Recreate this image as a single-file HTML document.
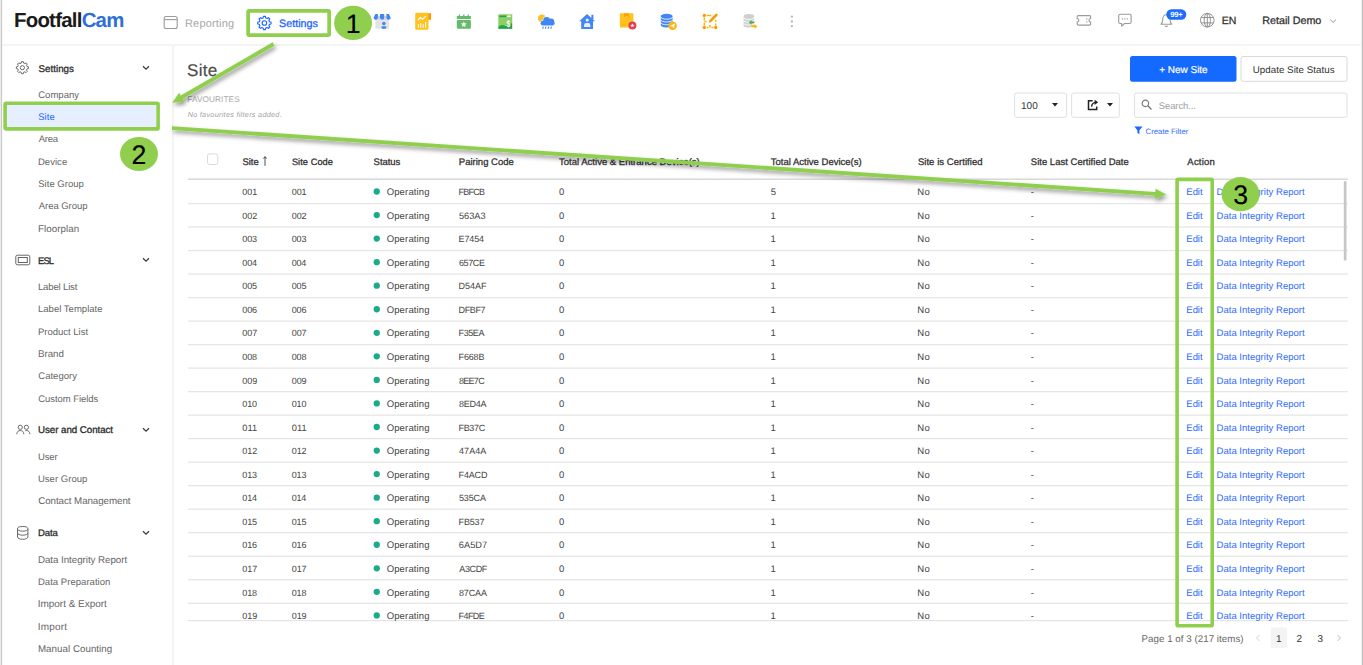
<!DOCTYPE html>
<html lang="en"><head><meta charset="utf-8"><title>FootfallCam - Site</title>
<style>
html,body{margin:0;padding:0;background:#fff}
body{width:1363px;height:665px;position:relative;overflow:hidden;font-family:"Liberation Sans",sans-serif;text-rendering:geometricPrecision}
.b{position:absolute;display:block}
.t{position:absolute;white-space:nowrap;line-height:20px;height:20px}
</style></head><body>
<svg class="b" style="left:0;top:0" width="1363" height="665" viewBox="0 0 1363 665"><rect x="0" y="0" width="1" height="665" fill="#ebebeb"/><rect x="1" y="0" width="1.100" height="665" fill="#c8c8c8"/><rect x="1361.700" y="0" width="1.300" height="665" fill="#c0c0c0"/><rect x="2.200" y="43.900" width="1359.300" height="2.100" fill="#f3f4f6"/><rect x="172" y="45" width="2" height="620" fill="#f3f4f6"/><rect x="6.900" y="104.900" width="149.300" height="22" fill="#e6efff"/><rect x="1130" y="56" width="106.500" height="25.800" rx="2.500" fill="#1469ff"/><rect x="1241" y="56.500" width="106" height="24.800" rx="2" fill="#fff" stroke="#dadada"/><rect x="1014.600" y="93" width="52" height="24.300" rx="2" fill="#fff" stroke="#e0e0e0"/><rect x="1071.600" y="93" width="47.700" height="24.300" rx="2" fill="#fff" stroke="#e0e0e0"/><rect x="1134.500" y="93" width="212.500" height="24.300" rx="2" fill="#fff" stroke="#e0e0e0"/><rect x="207.500" y="153.900" width="10.300" height="10.600" rx="2" fill="#fff" stroke="#dadada"/><rect x="187.900" y="177.900" width="1159.900" height="1" fill="#ececec"/><rect x="187.900" y="178.900" width="1159.900" height="1.100" fill="#d9d9d9"/><rect x="187.900" y="202.90" width="1159.900" height="1.300" fill="#e6e6e6"/><rect x="187.900" y="226.41" width="1159.900" height="1.300" fill="#e6e6e6"/><rect x="187.900" y="249.92" width="1159.900" height="1.300" fill="#e6e6e6"/><rect x="187.900" y="273.43" width="1159.900" height="1.300" fill="#e6e6e6"/><rect x="187.900" y="296.94" width="1159.900" height="1.300" fill="#e6e6e6"/><rect x="187.900" y="320.45" width="1159.900" height="1.300" fill="#e6e6e6"/><rect x="187.900" y="343.96" width="1159.900" height="1.300" fill="#e6e6e6"/><rect x="187.900" y="367.47" width="1159.900" height="1.300" fill="#e6e6e6"/><rect x="187.900" y="390.98" width="1159.900" height="1.300" fill="#e6e6e6"/><rect x="187.900" y="414.49" width="1159.900" height="1.300" fill="#e6e6e6"/><rect x="187.900" y="438.00" width="1159.900" height="1.300" fill="#e6e6e6"/><rect x="187.900" y="461.51" width="1159.900" height="1.300" fill="#e6e6e6"/><rect x="187.900" y="485.02" width="1159.900" height="1.300" fill="#e6e6e6"/><rect x="187.900" y="508.53" width="1159.900" height="1.300" fill="#e6e6e6"/><rect x="187.900" y="532.04" width="1159.900" height="1.300" fill="#e6e6e6"/><rect x="187.900" y="555.55" width="1159.900" height="1.300" fill="#e6e6e6"/><rect x="187.900" y="579.06" width="1159.900" height="1.300" fill="#e6e6e6"/><rect x="187.900" y="602.57" width="1159.900" height="1.300" fill="#e6e6e6"/><circle cx="376.750" cy="191.50" r="3.150" fill="#1aab8a"/><circle cx="376.750" cy="215.05" r="3.150" fill="#1aab8a"/><circle cx="376.750" cy="238.60" r="3.150" fill="#1aab8a"/><circle cx="376.750" cy="262.15" r="3.150" fill="#1aab8a"/><circle cx="376.750" cy="285.70" r="3.150" fill="#1aab8a"/><circle cx="376.750" cy="309.25" r="3.150" fill="#1aab8a"/><circle cx="376.750" cy="332.80" r="3.150" fill="#1aab8a"/><circle cx="376.750" cy="356.35" r="3.150" fill="#1aab8a"/><circle cx="376.750" cy="379.90" r="3.150" fill="#1aab8a"/><circle cx="376.750" cy="403.45" r="3.150" fill="#1aab8a"/><circle cx="376.750" cy="427.00" r="3.150" fill="#1aab8a"/><circle cx="376.750" cy="450.55" r="3.150" fill="#1aab8a"/><circle cx="376.750" cy="474.10" r="3.150" fill="#1aab8a"/><circle cx="376.750" cy="497.65" r="3.150" fill="#1aab8a"/><circle cx="376.750" cy="521.20" r="3.150" fill="#1aab8a"/><circle cx="376.750" cy="544.75" r="3.150" fill="#1aab8a"/><circle cx="376.750" cy="568.30" r="3.150" fill="#1aab8a"/><circle cx="376.750" cy="591.85" r="3.150" fill="#1aab8a"/><circle cx="376.750" cy="615.40" r="3.150" fill="#1aab8a"/><rect x="187.900" y="620" width="1159.900" height="1.200" fill="#e4e4e4"/><rect x="1343.800" y="181.200" width="2.700" height="79.300" fill="#c6c6c6"/><rect x="1270.700" y="627.600" width="16.300" height="20.500" rx="2" fill="#f4f4f4"/></svg>
<span class="t" style="left:14px;top:8px;line-height:26px;font-size:20.400px;font-weight:bold;color:#1a1a1a;letter-spacing:-0.750px">Footfall<span style="color:#2f6fd6">Cam</span></span>
<svg class="b" style="left:163px;top:15px" width="16" height="15" viewBox="0 0 16 15"><rect x="1.2" y="1.5" width="13" height="12" rx="2" fill="none" stroke="#9a9a9a" stroke-width="1.1"/><line x1="1.2" y1="4.6" x2="14.2" y2="4.6" stroke="#9a9a9a" stroke-width="1.1"/></svg>
<span class="t " style="left:184.94px;top:14px;font-size:11px;color:#a6a6a6;letter-spacing:0.194px;">Reporting</span>
<svg class="b" style="left:0;top:0" width="400" height="100" viewBox="0 0 400 100"><path d="M265.69 28.06 L265.40 29.62 L263.40 29.62 L263.11 28.06 L261.73 27.49 L260.42 28.39 L259.01 26.98 L259.91 25.67 L259.34 24.29 L257.78 24.00 L257.78 22.00 L259.34 21.71 L259.91 20.33 L259.01 19.02 L260.42 17.61 L261.73 18.51 L263.11 17.94 L263.40 16.38 L265.40 16.38 L265.69 17.94 L267.07 18.51 L268.38 17.61 L269.79 19.02 L268.89 20.33 L269.46 21.71 L271.02 22.00 L271.02 24.00 L269.46 24.29 L268.89 25.67 L269.79 26.98 L268.38 28.39 L267.07 27.49Z" fill="none" stroke="#1d66ff" stroke-width="1.15" stroke-linejoin="round"/><circle cx="264.4" cy="23" r="2.28" fill="none" stroke="#1d66ff" stroke-width="1.15"/></svg>
<span class="t " style="left:279.05px;top:14px;font-size:10.75px;color:#1d66ff;-webkit-text-stroke:0.3px #1d66ff;letter-spacing:0.006px;">Settings</span>
<svg class="b" style="left:0;top:0" width="1363" height="45" viewBox="0 0 1363 45"><rect x="375.5" y="15.9" width="13.5" height="12.9" fill="#e4e4e4"/><rect x="378" y="15.9" width="1.800" height="3.600" fill="#cfcfcf"/><rect x="384.400" y="15.9" width="1.800" height="3.600" fill="#cfcfcf"/><path d="M375.400 14.100h2.500v3.600a2.100 2.100 0 0 1-4.300 0zM380 14.100h4.200v3.600a2.100 2.100 0 0 1-4.200 0zM386.400 14.100h2.500l1.800 3.600a2.100 2.100 0 0 1-4.300 0z" fill="#4285f4"/><circle cx="383.900" cy="23.4" r="1.750" fill="#4285f4"/><rect x="381.500" y="26.300" width="4.800" height="2.400" rx="1.200" fill="#4285f4"/><rect x="428" y="13.2" width="3" height="6.6" fill="#ff9800"/><rect x="415.2" y="12.8" width="13.3" height="17" rx="1.3" fill="#ffc220"/><polyline points="418,20.2 420.4,17.6 422.6,19.2 425.9,16.2" fill="none" stroke="#fff" stroke-width="1.1"/><path d="M418.4 24.2v3.6M420.8 23v4.8M423.2 24.2v3.6M425.7 22v5.8" stroke="#fff" stroke-width="1"/><rect x="456.8" y="16" width="14.1" height="3" fill="#66bb6a"/><rect x="456.8" y="19.9" width="14.1" height="8.9" rx="1" fill="#66bb6a"/><path d="M459.4 14.4v2M463.8 14.4v2M468.2 14.4v2" stroke="#66bb6a" stroke-width="1.3"/><polygon points="463.80,21.40 464.62,23.37 466.75,23.54 465.13,24.93 465.62,27.01 463.80,25.89 461.98,27.01 462.47,24.93 460.85,23.54 462.98,23.37" fill="#fff"/><rect x="497.7" y="13.6" width="15" height="15.8" fill="#eeeeee"/><rect x="498.4" y="14.4" width="13.7" height="14.3" fill="#8ccf63"/><rect x="499.3" y="15.5" width="8" height="1.6" fill="#2e9e4f"/><rect x="506.6" y="15.5" width="4.2" height="1.6" fill="#e8f5e9"/><polygon points="498.4,28.7 498.4,26.700 501.500,25 503.600,25.300 506.200,26.200 512.1,23 512.1,28.7" fill="#27a04b"/><text transform="translate(508.400,26.700) scale(.72,1)" font-size="9.500" font-weight="bold" fill="#fff" text-anchor="middle" font-family="Liberation Sans, sans-serif">$</text><circle cx="541.9" cy="18.3" r="3.9" fill="#fbc02d"/><g stroke="#fff" stroke-width="1.2"><circle cx="546.6" cy="20.2" r="3.3" fill="#4285f4"/><circle cx="551.2" cy="21.6" r="3" fill="#4285f4"/><rect x="540.6" y="20.8" width="14" height="4.7" rx="2.35" fill="#4285f4"/></g><circle cx="546.6" cy="20.2" r="3.3" fill="#4285f4"/><circle cx="551.2" cy="21.6" r="3" fill="#4285f4"/><rect x="540.6" y="20.8" width="14" height="4.7" rx="2.35" fill="#4285f4"/><path d="M543.4 26.6l-.8 2.2M546.1 26.6l-.8 2.2M548.8 26.6l-.8 2.2M551.5 26.6l-.8 2.2" stroke="#4285f4" stroke-width="1.1"/><polygon points="587,13.9 595,21.3 579.2,21.3" fill="#4285f4"/><rect x="591.4" y="14.8" width="2" height="4.5" fill="#4285f4"/><rect x="581.2" y="20.5" width="11.8" height="8.5" fill="#4285f4"/><circle cx="587.200" cy="20.100" r="1.600" fill="#e6eefc"/><path d="M584 27v-1.800a2.300 2.300 0 0 1 2.300-2.300h1.800a2.300 2.300 0 0 1 2.300 2.300V27z" fill="#e6eefc"/><rect x="619.8" y="13.2" width="13.6" height="14.2" rx=".9" fill="#ffc220"/><polygon points="624.2,13.2 628.8,13.2 628.8,17.2 626.5,15.8 624.2,17.2" fill="#ffa000"/><rect x="622" y="24.4" width="4" height="1" fill="#f5b000"/><circle cx="632.4" cy="25.5" r="4" fill="#e53e4f"/><polygon points="632.40,23.50 632.96,24.84 634.40,24.95 633.30,25.89 633.63,27.30 632.40,26.55 631.17,27.30 631.50,25.89 630.40,24.95 631.84,24.84" fill="#fff"/><path d="M660.8000000000001 16a5.9 2.2 0 0 1 11.8 0V25.3a5.9 2.2 0 0 1 -11.8 0z" fill="#4285f4"/><path d="M660.8000000000001 17.00a5.9 2.2 0 0 0 11.8 0" fill="none" stroke="#fff" stroke-width=".85"/><path d="M660.8000000000001 19.80a5.9 2.2 0 0 0 11.8 0" fill="none" stroke="#fff" stroke-width=".85"/><path d="M660.8000000000001 22.60a5.9 2.2 0 0 0 11.8 0" fill="none" stroke="#fff" stroke-width=".85"/><circle cx="672.6" cy="25.7" r="4.3" fill="#fbb614"/><polygon points="669.9,26 674.8,23.4 674,28.2 672.6,26.6" fill="#fff"/><path d="M706.6 15.4h4.6M704.3 17.6v2.6M704.3 22.8v2.6M706.6 27.5h2M711.4 27.5h2.2M715.7 19.8v2M715.7 23.6v2M704.3 21.5h2.4M710 27.5v-2.6" stroke="#ffb300" stroke-width="1.500" fill="none"/><circle cx="704.3" cy="15.4" r="1.7" fill="#ff9800"/><circle cx="704.3" cy="27.5" r="1.7" fill="#ff9800"/><circle cx="715.7" cy="27.5" r="1.7" fill="#ff9800"/><path d="M716.400 14.900L710.800 20.600" stroke="#ff9800" stroke-width="2.600" stroke-linecap="round"/><polygon points="708.800,22.700 709.300,20.300 711.200,22.200" fill="#ff9800"/><path d="M743.6 16.2a5.3 2.2 0 0 1 10.6 0V25.3a5.3 2.2 0 0 1 -10.6 0z" fill="#cfcfcf"/><path d="M743.6 17.20a5.3 2.2 0 0 0 10.6 0" fill="none" stroke="#fff" stroke-width=".85"/><path d="M743.6 20.00a5.3 2.2 0 0 0 10.6 0" fill="none" stroke="#fff" stroke-width=".85"/><path d="M743.6 22.80a5.3 2.2 0 0 0 10.6 0" fill="none" stroke="#fff" stroke-width=".85"/><polygon points="748.8,22.4 751.6,20.1 751.6,21.5 754.4,21.5 754.4,23.3 751.6,23.3 751.6,24.7" fill="#4caf50"/><polygon points="757.4,26.4 754.6,24.1 754.6,25.5 751.4,25.5 751.4,27.3 754.6,27.3 754.6,28.7" fill="#ffb300"/><circle cx="791.9" cy="16.7" r="1.15" fill="#b8b8b8"/><circle cx="791.9" cy="21.5" r="1.15" fill="#b8b8b8"/><circle cx="791.9" cy="26.2" r="1.15" fill="#b8b8b8"/><path d="M1078.2 15.6h11.4a1 1 0 0 1 1 1v2.1a1.65 1.65 0 0 0 0 3.3v2.1a1 1 0 0 1-1 1h-11.4a1 1 0 0 1-1-1v-2.1a1.65 1.65 0 0 0 0-3.3v-2.1a1 1 0 0 1 1-1z" fill="none" stroke="#9a9a9a" stroke-width="1.1"/><path d="M1086.8 18.2v1.4M1086.8 21.2v1.4" stroke="#9a9a9a" stroke-width="1.1"/><path d="M1120.2 14.3h9.4a1.5 1.5 0 0 1 1.5 1.5v6.2a1.5 1.5 0 0 1-1.5 1.5h-5l-3 2.6v-2.6h-1.4a1.5 1.5 0 0 1-1.5-1.5v-6.2a1.5 1.5 0 0 1 1.5-1.5z" fill="none" stroke="#9a9a9a" stroke-width="1.1" stroke-linejoin="round"/><circle cx="1122.4" cy="18.9" r=".7" fill="#9a9a9a"/><circle cx="1124.9" cy="18.9" r=".7" fill="#9a9a9a"/><circle cx="1127.4" cy="18.9" r=".7" fill="#9a9a9a"/><path d="M1161 24.2c1.3-1 1.7-2.4 1.7-4.8c0-2.8 1.5-4.6 3.7-4.6s3.7 1.8 3.7 4.6c0 2.4.4 3.8 1.7 4.8z" fill="none" stroke="#9a9a9a" stroke-width="1.1" stroke-linejoin="round"/><path d="M1165 25.6a1.5 1.5 0 0 0 2.8 0" fill="none" stroke="#9a9a9a" stroke-width="1.1"/><rect x="1166.3" y="9.3" width="20" height="10.4" rx="5.2" fill="#1d6bff"/><text x="1176.3" y="17.1" font-size="7.6" font-weight="bold" fill="#fff" text-anchor="middle" font-family="Liberation Sans, sans-serif" letter-spacing="-.2">99+</text><g fill="none" stroke="#8c8c8c" stroke-width=".95"><circle cx="1207.3" cy="20.200" r="6.800"/><ellipse cx="1207.3" cy="20.200" rx="3.100" ry="6.800"/><path d="M1207.3 13.400v13.600M1201.200 17.500h12.200M1201.200 22.900h12.200"/></g><polyline points="1330.2,19.6 1333.1,22.4 1336,19.6" fill="none" stroke="#9a9a9a" stroke-width="1"/></svg>
<span class="t " style="left:1221.73px;top:11px;font-size:10.5px;color:#333;-webkit-text-stroke:0.3px #333;letter-spacing:0.021px;">EN</span>
<span class="t " style="left:1262.21px;top:11px;font-size:10.75px;color:#333;-webkit-text-stroke:0.3px #333;">Retail Demo</span>
<svg class="b" style="left:0;top:0" width="400" height="100" viewBox="0 0 400 100"><path d="M23.58 72.31 L23.31 73.73 L21.49 73.73 L21.22 72.31 L19.97 71.79 L18.78 72.61 L17.49 71.32 L18.31 70.13 L17.79 68.88 L16.37 68.61 L16.37 66.79 L17.79 66.52 L18.31 65.27 L17.49 64.08 L18.78 62.79 L19.97 63.61 L21.22 63.09 L21.49 61.67 L23.31 61.67 L23.58 63.09 L24.83 63.61 L26.02 62.79 L27.31 64.08 L26.49 65.27 L27.01 66.52 L28.43 66.79 L28.43 68.61 L27.01 68.88 L26.49 70.13 L27.31 71.32 L26.02 72.61 L24.83 71.79Z" fill="none" stroke="#6a6a6a" stroke-width="1" stroke-linejoin="round"/><circle cx="22.4" cy="67.7" r="2.07" fill="none" stroke="#6a6a6a" stroke-width="1"/></svg>
<span class="t " style="left:38.39px;top:60px;font-size:9.75px;color:#2b2b2b;-webkit-text-stroke:0.3px #2b2b2b;letter-spacing:0.053px;">Settings</span>
<svg class="b" style="left:141.7px;top:64.9px" width="8" height="6" viewBox="0 0 8 6"><polyline points="1,1.2 4,4.2 7,1.2" fill="none" stroke="#3c3c3c" stroke-width="1.250"/></svg>
<span class="t " style="left:38.25px;top:86px;font-size:9.5px;color:#666;letter-spacing:0.012px;">Company</span>
<span class="t " style="left:38.25px;top:108px;font-size:9.5px;color:#1d66ff;letter-spacing:0.029px;">Site</span>
<span class="t " style="left:38.70px;top:130px;font-size:9.5px;color:#666;letter-spacing:-0.246px;">Area</span>
<span class="t " style="left:37.96px;top:153px;font-size:9.5px;color:#666;letter-spacing:0.039px;">Device</span>
<span class="t " style="left:38.25px;top:175px;font-size:9.5px;color:#666;letter-spacing:0.022px;">Site Group</span>
<span class="t " style="left:38.70px;top:197px;font-size:9.5px;color:#666;letter-spacing:-0.029px;">Area Group</span>
<span class="t " style="left:37.94px;top:220px;font-size:9.75px;color:#666;letter-spacing:0.059px;">Floorplan</span>
<svg class="b" style="left:15px;top:254px" width="16" height="12" viewBox="0 0 16 12"><rect x=".8" y="1.2" width="14" height="9.6" rx="1.6" fill="none" stroke="#666" stroke-width="1"/><rect x="3.3" y="3.5" width="9" height="5" fill="none" stroke="#666" stroke-width="1"/></svg>
<span class="t " style="left:38.11px;top:252px;font-size:9.5px;color:#2b2b2b;-webkit-text-stroke:0.3px #2b2b2b;letter-spacing:-1.061px;">ESL</span>
<svg class="b" style="left:141.7px;top:257.2px" width="8" height="6" viewBox="0 0 8 6"><polyline points="1,1.2 4,4.2 7,1.2" fill="none" stroke="#3c3c3c" stroke-width="1.250"/></svg>
<span class="t " style="left:37.96px;top:278px;font-size:9.5px;color:#666;letter-spacing:-0.139px;">Label List</span>
<span class="t " style="left:37.96px;top:300px;font-size:9.5px;color:#666;letter-spacing:0.026px;">Label Template</span>
<span class="t " style="left:37.96px;top:323px;font-size:9.5px;color:#666;">Product List</span>
<span class="t " style="left:37.94px;top:345px;font-size:9.75px;color:#666;letter-spacing:-0.026px;">Brand</span>
<span class="t " style="left:38.25px;top:367px;font-size:9.5px;color:#666;letter-spacing:0.018px;">Category</span>
<span class="t " style="left:38.25px;top:390px;font-size:9.5px;color:#666;letter-spacing:-0.058px;">Custom Fields</span>
<svg class="b" style="left:15.500px;top:424.300px" width="15" height="11" viewBox="0 0 15 11"><g fill="none" stroke="#6a6a6a" stroke-width="1"><circle cx="4.300" cy="3.300" r="2.100"/><path d="M.700 10.200c.300-2.400 1.600-3.700 3.600-3.700s3.300 1.300 3.600 3.700"/><circle cx="10.400" cy="3.300" r="2.100"/><path d="M9.200 6.800c.400-.200.800-.300 1.200-.300c2 0 3.300 1.300 3.600 3.700"/></g></svg>
<span class="t " style="left:38.09px;top:421px;font-size:9.75px;color:#2b2b2b;-webkit-text-stroke:0.3px #2b2b2b;letter-spacing:-0.060px;">User and Contact</span>
<svg class="b" style="left:141.7px;top:426.8px" width="8" height="6" viewBox="0 0 8 6"><polyline points="1,1.2 4,4.2 7,1.2" fill="none" stroke="#3c3c3c" stroke-width="1.250"/></svg>
<span class="t " style="left:37.96px;top:448px;font-size:9.5px;color:#666;letter-spacing:-0.141px;">User</span>
<span class="t " style="left:37.96px;top:470px;font-size:9.5px;color:#666;letter-spacing:0.028px;">User Group</span>
<span class="t " style="left:38.24px;top:492px;font-size:9.75px;color:#666;letter-spacing:-0.059px;">Contact Management</span>
<svg class="b" style="left:16px;top:525px" width="14" height="16" viewBox="0 0 14 16"><g fill="none" stroke="#6a6a6a" stroke-width="1"><ellipse cx="6.700" cy="3.800" rx="5.200" ry="2.300"/><path d="M1.500 3.800v8.200c0 1.300 2.300 2.300 5.200 2.300s5.200-1 5.200-2.300V3.800"/><path d="M1.500 7.900c0 1.300 2.300 2.300 5.200 2.300s5.200-1 5.200-2.300"/></g></svg>
<span class="t " style="left:38.11px;top:524px;font-size:9.5px;color:#2b2b2b;-webkit-text-stroke:0.3px #2b2b2b;letter-spacing:-0.099px;">Data</span>
<svg class="b" style="left:141.7px;top:529.9px" width="8" height="6" viewBox="0 0 8 6"><polyline points="1,1.2 4,4.2 7,1.2" fill="none" stroke="#3c3c3c" stroke-width="1.250"/></svg>
<span class="t " style="left:37.94px;top:551px;font-size:9.75px;color:#666;letter-spacing:-0.036px;">Data Integrity Report</span>
<span class="t " style="left:37.96px;top:573px;font-size:9.5px;color:#666;letter-spacing:0.039px;">Data Preparation</span>
<span class="t " style="left:37.76px;top:595px;font-size:10px;color:#666;letter-spacing:-0.030px;">Import &amp; Export</span>
<span class="t " style="left:37.76px;top:618px;font-size:10px;color:#666;letter-spacing:0.191px;">Import</span>
<span class="t " style="left:37.94px;top:640px;font-size:9.75px;color:#666;letter-spacing:0.038px;">Manual Counting</span>
<span class="t " style="left:187.10px;top:61px;font-size:17px;color:#4c4c4c;letter-spacing:0.281px;-webkit-text-stroke:.2px #4c4c4c;">Site</span>
<span class="t " style="left:187.26px;top:90px;font-size:8.25px;color:#a9a9a9;letter-spacing:0.082px;">FAVOURITES</span>
<span class="t " style="left:187.67px;top:105px;font-size:7.25px;color:#a3a3a3;font-style:italic;letter-spacing:0.288px;">No favourites filters added.</span>
<span class="t " style="left:1159.33px;top:61px;font-size:10px;color:#fff;letter-spacing:-0.037px;-webkit-text-stroke:.2px #fff;">+ New Site</span>
<span class="t " style="left:1252.74px;top:61px;font-size:9.75px;color:#333;letter-spacing:0.033px;">Update Site Status</span>
<span class="t " style="left:1021.02px;top:97px;font-size:10px;color:#333;letter-spacing:0.016px;">100</span>
<svg class="b" style="left:1051.6px;top:103.2px" width="6" height="4"><polygon points="0,0 6,0 3,3.4" fill="#222"/></svg>
<svg class="b" style="left:1086.8px;top:99.2px" width="12" height="12" viewBox="0 0 12 12"><path d="M5.600 1.700H1.500v8.800h8.200V7.600" fill="none" stroke="#222" stroke-width="1.500"/><path d="M4.600 7.600c.2-2.600 1.600-4 4.200-4.200" fill="none" stroke="#222" stroke-width="1.4"/><polygon points="7.600,.8 11.200,3.300 7.600,5.900" fill="#222"/></svg>
<svg class="b" style="left:1107px;top:103.2px" width="6" height="4"><polygon points="0,0 6,0 3,3.4" fill="#222"/></svg>
<svg class="b" style="left:1141.400px;top:99.300px" width="11.400" height="11.400" viewBox="0 0 13 13"><circle cx="5" cy="5" r="3.700" fill="none" stroke="#777" stroke-width="1.300"/><path d="M7.800 7.800L11.500 11.500" stroke="#777" stroke-width="1.500" stroke-linecap="round"/></svg>
<span class="t " style="left:1158.85px;top:97px;font-size:9.5px;color:#a0a0a0;letter-spacing:-0.130px;">Search...</span>
<svg class="b" style="left:1134.300px;top:126.400px" width="9" height="9" viewBox="0 0 9 9"><path d="M.3.600h8.200L5.400 4.300v3.900L3.400 6.800V4.300z" fill="#1d66ff"/></svg>
<span class="t " style="left:1145.54px;top:122px;font-size:7.75px;color:#2f6bff;letter-spacing:0.017px;">Create Filter</span>
<span class="t " style="left:242.50px;top:153px;font-size:9.5px;color:#333;-webkit-text-stroke:0.3px #333;letter-spacing:-0.037px;">Site</span>
<svg class="b" style="left:262.200px;top:155.600px" width="6" height="11" viewBox="0 0 6 11"><path d="M3 9.800V.8M1.300 2.600L3 .700l1.700 1.900" fill="none" stroke="#222" stroke-width=".8"/></svg>
<span class="t " style="left:291.92px;top:152px;font-size:9.25px;color:#333;-webkit-text-stroke:0.3px #333;letter-spacing:0.048px;">Site Code</span>
<span class="t " style="left:373.60px;top:153px;font-size:9.5px;color:#333;-webkit-text-stroke:0.3px #333;letter-spacing:-0.045px;">Status</span>
<span class="t " style="left:458.81px;top:153px;font-size:9.5px;color:#333;-webkit-text-stroke:0.3px #333;letter-spacing:0.008px;">Pairing Code</span>
<span class="t " style="left:559.03px;top:153px;font-size:9.5px;color:#333;-webkit-text-stroke:0.3px #333;letter-spacing:0.010px;">Total Active &amp; Entrance Device(s)</span>
<span class="t " style="left:770.83px;top:153px;font-size:9.5px;color:#333;-webkit-text-stroke:0.3px #333;">Total Active Device(s)</span>
<span class="t " style="left:917.90px;top:153px;font-size:9.5px;color:#333;-webkit-text-stroke:0.3px #333;letter-spacing:0.046px;">Site is Certified</span>
<span class="t " style="left:1030.80px;top:153px;font-size:9.5px;color:#333;-webkit-text-stroke:0.3px #333;letter-spacing:0.011px;">Site Last Certified Date</span>
<span class="t " style="left:1187.35px;top:153px;font-size:9.5px;color:#333;-webkit-text-stroke:0.3px #333;letter-spacing:0.214px;">Action</span>
<div class="b" style="left:0;top:180px;width:1363px;height:441px;overflow:hidden">
<span class="t " style="left:242.35px;top:2px;font-size:9px;color:#444;letter-spacing:-0.102px;">001</span>
<span class="t " style="left:291.75px;top:2px;font-size:9px;color:#444;letter-spacing:-0.102px;">001</span>
<span class="t " style="left:386.65px;top:3px;font-size:9.5px;color:#444;letter-spacing:0.154px;">Operating</span>
<span class="t " style="left:458.60px;top:2px;font-size:9px;color:#444;letter-spacing:-0.758px;">FBFCB</span>
<span class="t " style="left:559.03px;top:3px;font-size:9.5px;color:#444;">0</span>
<span class="t " style="left:770.83px;top:3px;font-size:9.5px;color:#444;">5</span>
<span class="t " style="left:917.36px;top:3px;font-size:9.5px;color:#444;letter-spacing:0.216px;">No</span>
<span class="t " style="left:1030.75px;top:3px;font-size:9.5px;color:#444;">-</span>
<span class="t " style="left:1186.36px;top:3px;font-size:9.5px;color:#2f6bff;letter-spacing:-0.062px;">Edit</span>
<span class="t " style="left:1216.56px;top:3px;font-size:9.5px;color:#2f6bff;letter-spacing:0.023px;">Data Integrity Report</span>
<span class="t " style="left:242.35px;top:26px;font-size:9px;color:#444;letter-spacing:-0.102px;">002</span>
<span class="t " style="left:291.75px;top:26px;font-size:9px;color:#444;letter-spacing:-0.102px;">002</span>
<span class="t " style="left:386.65px;top:27px;font-size:9.5px;color:#444;letter-spacing:0.154px;">Operating</span>
<span class="t " style="left:458.94px;top:26px;font-size:9.25px;color:#444;letter-spacing:-0.037px;">563A3</span>
<span class="t " style="left:559.03px;top:27px;font-size:9.5px;color:#444;">0</span>
<span class="t " style="left:770.46px;top:27px;font-size:9.5px;color:#444;">1</span>
<span class="t " style="left:917.36px;top:27px;font-size:9.5px;color:#444;letter-spacing:0.216px;">No</span>
<span class="t " style="left:1030.75px;top:27px;font-size:9.5px;color:#444;">-</span>
<span class="t " style="left:1186.36px;top:27px;font-size:9.5px;color:#2f6bff;letter-spacing:-0.062px;">Edit</span>
<span class="t " style="left:1216.56px;top:27px;font-size:9.5px;color:#2f6bff;letter-spacing:0.023px;">Data Integrity Report</span>
<span class="t " style="left:242.35px;top:49px;font-size:9px;color:#444;letter-spacing:-0.137px;">003</span>
<span class="t " style="left:291.75px;top:49px;font-size:9px;color:#444;letter-spacing:-0.137px;">003</span>
<span class="t " style="left:386.65px;top:50px;font-size:9.5px;color:#444;letter-spacing:0.154px;">Operating</span>
<span class="t " style="left:458.60px;top:49px;font-size:9px;color:#444;letter-spacing:-0.136px;">E7454</span>
<span class="t " style="left:559.03px;top:50px;font-size:9.5px;color:#444;">0</span>
<span class="t " style="left:770.46px;top:50px;font-size:9.5px;color:#444;">1</span>
<span class="t " style="left:917.36px;top:50px;font-size:9.5px;color:#444;letter-spacing:0.216px;">No</span>
<span class="t " style="left:1030.75px;top:50px;font-size:9.5px;color:#444;">-</span>
<span class="t " style="left:1186.36px;top:50px;font-size:9.5px;color:#2f6bff;letter-spacing:-0.062px;">Edit</span>
<span class="t " style="left:1216.56px;top:50px;font-size:9.5px;color:#2f6bff;letter-spacing:0.023px;">Data Integrity Report</span>
<span class="t " style="left:242.35px;top:73px;font-size:9px;color:#444;letter-spacing:-0.207px;">004</span>
<span class="t " style="left:291.75px;top:73px;font-size:9px;color:#444;letter-spacing:-0.207px;">004</span>
<span class="t " style="left:386.65px;top:74px;font-size:9.5px;color:#444;letter-spacing:0.154px;">Operating</span>
<span class="t " style="left:458.88px;top:73px;font-size:9px;color:#444;letter-spacing:-0.352px;">657CE</span>
<span class="t " style="left:559.03px;top:74px;font-size:9.5px;color:#444;">0</span>
<span class="t " style="left:770.46px;top:74px;font-size:9.5px;color:#444;">1</span>
<span class="t " style="left:917.36px;top:74px;font-size:9.5px;color:#444;letter-spacing:0.216px;">No</span>
<span class="t " style="left:1030.75px;top:74px;font-size:9.5px;color:#444;">-</span>
<span class="t " style="left:1186.36px;top:74px;font-size:9.5px;color:#2f6bff;letter-spacing:-0.062px;">Edit</span>
<span class="t " style="left:1216.56px;top:74px;font-size:9.5px;color:#2f6bff;letter-spacing:0.023px;">Data Integrity Report</span>
<span class="t " style="left:242.35px;top:96px;font-size:9px;color:#444;letter-spacing:-0.137px;">005</span>
<span class="t " style="left:291.75px;top:96px;font-size:9px;color:#444;letter-spacing:-0.137px;">005</span>
<span class="t " style="left:386.65px;top:97px;font-size:9.5px;color:#444;letter-spacing:0.154px;">Operating</span>
<span class="t " style="left:458.60px;top:96px;font-size:9px;color:#444;">D54AF</span>
<span class="t " style="left:559.03px;top:97px;font-size:9.5px;color:#444;">0</span>
<span class="t " style="left:770.46px;top:97px;font-size:9.5px;color:#444;">1</span>
<span class="t " style="left:917.36px;top:97px;font-size:9.5px;color:#444;letter-spacing:0.216px;">No</span>
<span class="t " style="left:1030.75px;top:97px;font-size:9.5px;color:#444;">-</span>
<span class="t " style="left:1186.36px;top:97px;font-size:9.5px;color:#2f6bff;letter-spacing:-0.062px;">Edit</span>
<span class="t " style="left:1216.56px;top:97px;font-size:9.5px;color:#2f6bff;letter-spacing:0.023px;">Data Integrity Report</span>
<span class="t " style="left:242.35px;top:120px;font-size:9px;color:#444;letter-spacing:-0.137px;">006</span>
<span class="t " style="left:291.75px;top:120px;font-size:9px;color:#444;letter-spacing:-0.137px;">006</span>
<span class="t " style="left:386.65px;top:121px;font-size:9.5px;color:#444;letter-spacing:0.154px;">Operating</span>
<span class="t " style="left:458.60px;top:120px;font-size:9px;color:#444;letter-spacing:-0.399px;">DFBF7</span>
<span class="t " style="left:559.03px;top:121px;font-size:9.5px;color:#444;">0</span>
<span class="t " style="left:770.46px;top:121px;font-size:9.5px;color:#444;">1</span>
<span class="t " style="left:917.36px;top:121px;font-size:9.5px;color:#444;letter-spacing:0.216px;">No</span>
<span class="t " style="left:1030.75px;top:121px;font-size:9.5px;color:#444;">-</span>
<span class="t " style="left:1186.36px;top:121px;font-size:9.5px;color:#2f6bff;letter-spacing:-0.062px;">Edit</span>
<span class="t " style="left:1216.56px;top:121px;font-size:9.5px;color:#2f6bff;letter-spacing:0.023px;">Data Integrity Report</span>
<span class="t " style="left:242.35px;top:143px;font-size:9px;color:#444;letter-spacing:-0.102px;">007</span>
<span class="t " style="left:291.75px;top:143px;font-size:9px;color:#444;letter-spacing:-0.102px;">007</span>
<span class="t " style="left:386.65px;top:144px;font-size:9.5px;color:#444;letter-spacing:0.154px;">Operating</span>
<span class="t " style="left:458.60px;top:143px;font-size:9px;color:#444;letter-spacing:-0.428px;">F35EA</span>
<span class="t " style="left:559.03px;top:144px;font-size:9.5px;color:#444;">0</span>
<span class="t " style="left:770.46px;top:144px;font-size:9.5px;color:#444;">1</span>
<span class="t " style="left:917.36px;top:144px;font-size:9.5px;color:#444;letter-spacing:0.216px;">No</span>
<span class="t " style="left:1030.75px;top:144px;font-size:9.5px;color:#444;">-</span>
<span class="t " style="left:1186.36px;top:144px;font-size:9.5px;color:#2f6bff;letter-spacing:-0.062px;">Edit</span>
<span class="t " style="left:1216.56px;top:144px;font-size:9.5px;color:#2f6bff;letter-spacing:0.023px;">Data Integrity Report</span>
<span class="t " style="left:242.35px;top:167px;font-size:9px;color:#444;letter-spacing:-0.137px;">008</span>
<span class="t " style="left:291.75px;top:167px;font-size:9px;color:#444;letter-spacing:-0.137px;">008</span>
<span class="t " style="left:386.65px;top:168px;font-size:9.5px;color:#444;letter-spacing:0.154px;">Operating</span>
<span class="t " style="left:458.60px;top:167px;font-size:9px;color:#444;letter-spacing:-0.169px;">F668B</span>
<span class="t " style="left:559.03px;top:168px;font-size:9.5px;color:#444;">0</span>
<span class="t " style="left:770.46px;top:168px;font-size:9.5px;color:#444;">1</span>
<span class="t " style="left:917.36px;top:168px;font-size:9.5px;color:#444;letter-spacing:0.216px;">No</span>
<span class="t " style="left:1030.75px;top:168px;font-size:9.5px;color:#444;">-</span>
<span class="t " style="left:1186.36px;top:168px;font-size:9.5px;color:#2f6bff;letter-spacing:-0.062px;">Edit</span>
<span class="t " style="left:1216.56px;top:168px;font-size:9.5px;color:#2f6bff;letter-spacing:0.023px;">Data Integrity Report</span>
<span class="t " style="left:242.35px;top:191px;font-size:9px;color:#444;letter-spacing:-0.102px;">009</span>
<span class="t " style="left:291.75px;top:191px;font-size:9px;color:#444;letter-spacing:-0.102px;">009</span>
<span class="t " style="left:386.65px;top:192px;font-size:9.5px;color:#444;letter-spacing:0.154px;">Operating</span>
<span class="t " style="left:458.95px;top:191px;font-size:9px;color:#444;letter-spacing:-0.693px;">8EE7C</span>
<span class="t " style="left:559.03px;top:192px;font-size:9.5px;color:#444;">0</span>
<span class="t " style="left:770.46px;top:192px;font-size:9.5px;color:#444;">1</span>
<span class="t " style="left:917.36px;top:192px;font-size:9.5px;color:#444;letter-spacing:0.216px;">No</span>
<span class="t " style="left:1030.75px;top:192px;font-size:9.5px;color:#444;">-</span>
<span class="t " style="left:1186.36px;top:192px;font-size:9.5px;color:#2f6bff;letter-spacing:-0.062px;">Edit</span>
<span class="t " style="left:1216.56px;top:192px;font-size:9.5px;color:#2f6bff;letter-spacing:0.023px;">Data Integrity Report</span>
<span class="t " style="left:242.35px;top:214px;font-size:9px;color:#444;letter-spacing:-0.137px;">010</span>
<span class="t " style="left:291.75px;top:214px;font-size:9px;color:#444;letter-spacing:-0.137px;">010</span>
<span class="t " style="left:386.65px;top:215px;font-size:9.5px;color:#444;letter-spacing:0.154px;">Operating</span>
<span class="t " style="left:458.95px;top:214px;font-size:9px;color:#444;letter-spacing:-0.259px;">8ED4A</span>
<span class="t " style="left:559.03px;top:215px;font-size:9.5px;color:#444;">0</span>
<span class="t " style="left:770.46px;top:215px;font-size:9.5px;color:#444;">1</span>
<span class="t " style="left:917.36px;top:215px;font-size:9.5px;color:#444;letter-spacing:0.216px;">No</span>
<span class="t " style="left:1030.75px;top:215px;font-size:9.5px;color:#444;">-</span>
<span class="t " style="left:1186.36px;top:215px;font-size:9.5px;color:#2f6bff;letter-spacing:-0.062px;">Edit</span>
<span class="t " style="left:1216.56px;top:215px;font-size:9.5px;color:#2f6bff;letter-spacing:0.023px;">Data Integrity Report</span>
<span class="t " style="left:242.34px;top:238px;font-size:9.25px;color:#444;letter-spacing:0.026px;">011</span>
<span class="t " style="left:291.74px;top:238px;font-size:9.25px;color:#444;letter-spacing:0.026px;">011</span>
<span class="t " style="left:386.65px;top:239px;font-size:9.5px;color:#444;letter-spacing:0.154px;">Operating</span>
<span class="t " style="left:458.60px;top:238px;font-size:9px;color:#444;letter-spacing:-0.367px;">FB37C</span>
<span class="t " style="left:559.03px;top:239px;font-size:9.5px;color:#444;">0</span>
<span class="t " style="left:770.46px;top:239px;font-size:9.5px;color:#444;">1</span>
<span class="t " style="left:917.36px;top:239px;font-size:9.5px;color:#444;letter-spacing:0.216px;">No</span>
<span class="t " style="left:1030.75px;top:239px;font-size:9.5px;color:#444;">-</span>
<span class="t " style="left:1186.36px;top:239px;font-size:9.5px;color:#2f6bff;letter-spacing:-0.062px;">Edit</span>
<span class="t " style="left:1216.56px;top:239px;font-size:9.5px;color:#2f6bff;letter-spacing:0.023px;">Data Integrity Report</span>
<span class="t " style="left:242.35px;top:261px;font-size:9px;color:#444;letter-spacing:-0.102px;">012</span>
<span class="t " style="left:291.75px;top:261px;font-size:9px;color:#444;letter-spacing:-0.102px;">012</span>
<span class="t " style="left:386.65px;top:262px;font-size:9.5px;color:#444;letter-spacing:0.154px;">Operating</span>
<span class="t " style="left:459.09px;top:261px;font-size:9px;color:#444;letter-spacing:0.021px;">47A4A</span>
<span class="t " style="left:559.03px;top:262px;font-size:9.5px;color:#444;">0</span>
<span class="t " style="left:770.46px;top:262px;font-size:9.5px;color:#444;">1</span>
<span class="t " style="left:917.36px;top:262px;font-size:9.5px;color:#444;letter-spacing:0.216px;">No</span>
<span class="t " style="left:1030.75px;top:262px;font-size:9.5px;color:#444;">-</span>
<span class="t " style="left:1186.36px;top:262px;font-size:9.5px;color:#2f6bff;letter-spacing:-0.062px;">Edit</span>
<span class="t " style="left:1216.56px;top:262px;font-size:9.5px;color:#2f6bff;letter-spacing:0.023px;">Data Integrity Report</span>
<span class="t " style="left:242.35px;top:285px;font-size:9px;color:#444;letter-spacing:-0.137px;">013</span>
<span class="t " style="left:291.75px;top:285px;font-size:9px;color:#444;letter-spacing:-0.137px;">013</span>
<span class="t " style="left:386.65px;top:286px;font-size:9.5px;color:#444;letter-spacing:0.154px;">Operating</span>
<span class="t " style="left:458.60px;top:285px;font-size:9px;color:#444;letter-spacing:-0.165px;">F4ACD</span>
<span class="t " style="left:559.03px;top:286px;font-size:9.5px;color:#444;">0</span>
<span class="t " style="left:770.46px;top:286px;font-size:9.5px;color:#444;">1</span>
<span class="t " style="left:917.36px;top:286px;font-size:9.5px;color:#444;letter-spacing:0.216px;">No</span>
<span class="t " style="left:1030.75px;top:286px;font-size:9.5px;color:#444;">-</span>
<span class="t " style="left:1186.36px;top:286px;font-size:9.5px;color:#2f6bff;letter-spacing:-0.062px;">Edit</span>
<span class="t " style="left:1216.56px;top:286px;font-size:9.5px;color:#2f6bff;letter-spacing:0.023px;">Data Integrity Report</span>
<span class="t " style="left:242.35px;top:308px;font-size:9px;color:#444;letter-spacing:-0.207px;">014</span>
<span class="t " style="left:291.75px;top:308px;font-size:9px;color:#444;letter-spacing:-0.207px;">014</span>
<span class="t " style="left:386.65px;top:309px;font-size:9.5px;color:#444;letter-spacing:0.154px;">Operating</span>
<span class="t " style="left:458.95px;top:308px;font-size:9px;color:#444;letter-spacing:-0.129px;">535CA</span>
<span class="t " style="left:559.03px;top:309px;font-size:9.5px;color:#444;">0</span>
<span class="t " style="left:770.46px;top:309px;font-size:9.5px;color:#444;">1</span>
<span class="t " style="left:917.36px;top:309px;font-size:9.5px;color:#444;letter-spacing:0.216px;">No</span>
<span class="t " style="left:1030.75px;top:309px;font-size:9.5px;color:#444;">-</span>
<span class="t " style="left:1186.36px;top:309px;font-size:9.5px;color:#2f6bff;letter-spacing:-0.062px;">Edit</span>
<span class="t " style="left:1216.56px;top:309px;font-size:9.5px;color:#2f6bff;letter-spacing:0.023px;">Data Integrity Report</span>
<span class="t " style="left:242.35px;top:332px;font-size:9px;color:#444;letter-spacing:-0.137px;">015</span>
<span class="t " style="left:291.75px;top:332px;font-size:9px;color:#444;letter-spacing:-0.137px;">015</span>
<span class="t " style="left:386.65px;top:333px;font-size:9.5px;color:#444;letter-spacing:0.154px;">Operating</span>
<span class="t " style="left:458.60px;top:332px;font-size:9px;color:#444;letter-spacing:-0.169px;">FB537</span>
<span class="t " style="left:559.03px;top:333px;font-size:9.5px;color:#444;">0</span>
<span class="t " style="left:770.46px;top:333px;font-size:9.5px;color:#444;">1</span>
<span class="t " style="left:917.36px;top:333px;font-size:9.5px;color:#444;letter-spacing:0.216px;">No</span>
<span class="t " style="left:1030.75px;top:333px;font-size:9.5px;color:#444;">-</span>
<span class="t " style="left:1186.36px;top:333px;font-size:9.5px;color:#2f6bff;letter-spacing:-0.062px;">Edit</span>
<span class="t " style="left:1216.56px;top:333px;font-size:9.5px;color:#2f6bff;letter-spacing:0.023px;">Data Integrity Report</span>
<span class="t " style="left:242.35px;top:355px;font-size:9px;color:#444;letter-spacing:-0.137px;">016</span>
<span class="t " style="left:291.75px;top:355px;font-size:9px;color:#444;letter-spacing:-0.137px;">016</span>
<span class="t " style="left:386.65px;top:356px;font-size:9.5px;color:#444;letter-spacing:0.154px;">Operating</span>
<span class="t " style="left:458.87px;top:355px;font-size:9.25px;color:#444;">6A5D7</span>
<span class="t " style="left:559.03px;top:356px;font-size:9.5px;color:#444;">0</span>
<span class="t " style="left:770.46px;top:356px;font-size:9.5px;color:#444;">1</span>
<span class="t " style="left:917.36px;top:356px;font-size:9.5px;color:#444;letter-spacing:0.216px;">No</span>
<span class="t " style="left:1030.75px;top:356px;font-size:9.5px;color:#444;">-</span>
<span class="t " style="left:1186.36px;top:356px;font-size:9.5px;color:#2f6bff;letter-spacing:-0.062px;">Edit</span>
<span class="t " style="left:1216.56px;top:356px;font-size:9.5px;color:#2f6bff;letter-spacing:0.023px;">Data Integrity Report</span>
<span class="t " style="left:242.35px;top:379px;font-size:9px;color:#444;letter-spacing:-0.102px;">017</span>
<span class="t " style="left:291.75px;top:379px;font-size:9px;color:#444;letter-spacing:-0.102px;">017</span>
<span class="t " style="left:386.65px;top:380px;font-size:9.5px;color:#444;letter-spacing:0.154px;">Operating</span>
<span class="t " style="left:459.30px;top:379px;font-size:9px;color:#444;letter-spacing:-0.359px;">A3CDF</span>
<span class="t " style="left:559.03px;top:380px;font-size:9.5px;color:#444;">0</span>
<span class="t " style="left:770.46px;top:380px;font-size:9.5px;color:#444;">1</span>
<span class="t " style="left:917.36px;top:380px;font-size:9.5px;color:#444;letter-spacing:0.216px;">No</span>
<span class="t " style="left:1030.75px;top:380px;font-size:9.5px;color:#444;">-</span>
<span class="t " style="left:1186.36px;top:380px;font-size:9.5px;color:#2f6bff;letter-spacing:-0.062px;">Edit</span>
<span class="t " style="left:1216.56px;top:380px;font-size:9.5px;color:#2f6bff;letter-spacing:0.023px;">Data Integrity Report</span>
<span class="t " style="left:242.35px;top:403px;font-size:9px;color:#444;letter-spacing:-0.137px;">018</span>
<span class="t " style="left:291.75px;top:403px;font-size:9px;color:#444;letter-spacing:-0.137px;">018</span>
<span class="t " style="left:386.65px;top:404px;font-size:9.5px;color:#444;letter-spacing:0.154px;">Operating</span>
<span class="t " style="left:458.95px;top:403px;font-size:9px;color:#444;letter-spacing:-0.124px;">87CAA</span>
<span class="t " style="left:559.03px;top:404px;font-size:9.5px;color:#444;">0</span>
<span class="t " style="left:770.46px;top:404px;font-size:9.5px;color:#444;">1</span>
<span class="t " style="left:917.36px;top:404px;font-size:9.5px;color:#444;letter-spacing:0.216px;">No</span>
<span class="t " style="left:1030.75px;top:404px;font-size:9.5px;color:#444;">-</span>
<span class="t " style="left:1186.36px;top:404px;font-size:9.5px;color:#2f6bff;letter-spacing:-0.062px;">Edit</span>
<span class="t " style="left:1216.56px;top:404px;font-size:9.5px;color:#2f6bff;letter-spacing:0.023px;">Data Integrity Report</span>
<span class="t " style="left:242.35px;top:426px;font-size:9px;color:#444;letter-spacing:-0.102px;">019</span>
<span class="t " style="left:291.75px;top:426px;font-size:9px;color:#444;letter-spacing:-0.102px;">019</span>
<span class="t " style="left:386.65px;top:427px;font-size:9.5px;color:#444;letter-spacing:0.154px;">Operating</span>
<span class="t " style="left:458.60px;top:426px;font-size:9px;color:#444;letter-spacing:-0.575px;">F4FDE</span>
<span class="t " style="left:559.03px;top:427px;font-size:9.5px;color:#444;">0</span>
<span class="t " style="left:770.46px;top:427px;font-size:9.5px;color:#444;">1</span>
<span class="t " style="left:917.36px;top:427px;font-size:9.5px;color:#444;letter-spacing:0.216px;">No</span>
<span class="t " style="left:1030.75px;top:427px;font-size:9.5px;color:#444;">-</span>
<span class="t " style="left:1186.36px;top:427px;font-size:9.5px;color:#2f6bff;letter-spacing:-0.062px;">Edit</span>
<span class="t " style="left:1216.56px;top:427px;font-size:9.5px;color:#2f6bff;letter-spacing:0.023px;">Data Integrity Report</span>
</div>
<span class="t " style="left:1141.54px;top:630px;font-size:9.75px;color:#666;letter-spacing:0.031px;">Page 1 of 3 (217 items)</span>
<span class="t " style="left:1276.02px;top:630px;font-size:10px;color:#333;">1</span>
<span class="t " style="left:1296.53px;top:630px;font-size:10px;color:#333;">2</span>
<span class="t " style="left:1317.61px;top:630px;font-size:10px;color:#333;">3</span>
<svg class="b" style="left:1255px;top:634px" width="6" height="8"><polyline points="4.500,1 1.500,4 4.500,7" fill="none" stroke="#d5d5d5" stroke-width="1"/></svg>
<svg class="b" style="left:1336px;top:634px" width="6" height="8"><polyline points="1.500,1 4.500,4 1.500,7" fill="none" stroke="#bdbdbd" stroke-width="1"/></svg>
<svg class="b" style="left:0;top:0;z-index:5" width="1363" height="665" viewBox="0 0 1363 665"><defs><filter id="sh" x="-5%" y="-30%" width="110%" height="180%"><feDropShadow dx="1.600" dy="2.700" stdDeviation="1.900" flood-color="#000" flood-opacity=".42"/></filter></defs><polygon filter="url(#sh)" fill="#90cf4e" points="272.62,42.31 180.74,95.60 179.08,92.74 172.20,102.80 184.35,101.82 182.69,98.97 274.58,45.69"/><polygon filter="url(#sh)" fill="#90cf4e" points="171.87,130.05 1155.09,195.81 1154.87,199.10 1166.20,194.60 1155.57,188.63 1155.35,191.92 172.13,126.15"/><rect x="1177.1" y="179.4" width="35.100" height="446.400" rx="1" fill="none" stroke="#90cf4e" stroke-width="3.600"/><rect x="248.150" y="10.950" width="81" height="24.100" rx="1" fill="none" stroke="#90cf4e" stroke-width="3.700"/><rect x="5.100" y="103.200" width="153" height="25.700" rx="1" fill="none" stroke="#90cf4e" stroke-width="3.600"/><ellipse cx="353.1" cy="22.9" rx="19" ry="17.100" fill="#90cf4e"/><text x="353.1" y="32.7" font-size="26.700" fill="#000" stroke="#000" stroke-width=".15" text-anchor="middle" font-family="Liberation Sans, sans-serif">1</text><ellipse cx="139" cy="154" rx="19" ry="17.100" fill="#90cf4e"/><text x="139" y="163.8" font-size="26.700" fill="#000" stroke="#000" stroke-width=".15" text-anchor="middle" font-family="Liberation Sans, sans-serif">2</text><ellipse cx="1240.6" cy="194.2" rx="19" ry="17.100" fill="#90cf4e"/><text x="1240.6" y="204.0" font-size="26.700" fill="#000" stroke="#000" stroke-width=".15" text-anchor="middle" font-family="Liberation Sans, sans-serif">3</text></svg>
</body></html>
